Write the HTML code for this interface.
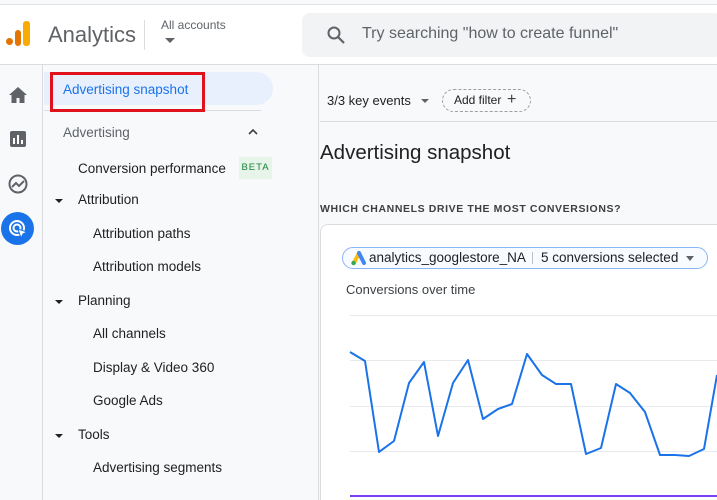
<!DOCTYPE html>
<html style="overflow:hidden;width:717px;height:500px"><head><meta charset="utf-8"><style>
*{margin:0;padding:0;box-sizing:border-box}
body{width:717px;height:500px;overflow:hidden;background:#f8f9fa;font-family:"Liberation Sans",Arial,sans-serif;position:relative;color:#202124}
.a{position:absolute;white-space:nowrap}
</style></head><body>
<div class="a" style="left:0;top:4px;width:717px;height:61px;background:#fff;border-top:1px solid #e3e3e3;border-bottom:1px solid #dadce0"></div>
<div class="a" style="left:6px;top:38px;width:7px;height:7px;border-radius:50%;background:#e37400"></div>
<div class="a" style="left:15px;top:30px;width:6px;height:16px;border-radius:3px;background:#e37400"></div>
<div class="a" style="left:23px;top:21px;width:7px;height:25px;border-radius:3px;background:#f9ab00"></div>
<div class="a" style="left:48px;top:22px;font-size:22px;color:#5f6368">Analytics</div>
<div class="a" style="left:144px;top:20px;width:1px;height:30px;background:#dadce0"></div>
<div class="a" style="left:161px;top:18px;font-size:12px;color:#5f6368">All accounts</div>
<div class="a" style="left:165px;top:38px;border-left:5px solid transparent;border-right:5px solid transparent;border-top:5px solid #5f6368"></div>
<div class="a" style="left:302px;top:13px;width:420px;height:44px;background:#f1f3f4;border-radius:8px"></div>
<svg class="a" style="left:326px;top:25px" width="20" height="20" viewBox="0 0 20 20"><circle cx="8" cy="8" r="5.5" fill="none" stroke="#5f6368" stroke-width="2"/><path d="M12 12l6 6" stroke="#5f6368" stroke-width="2.2"/></svg>
<div class="a" style="left:362px;top:25px;font-size:16px;color:#5f6368">Try searching "how to create funnel"</div>
<div class="a" style="left:0;top:65px;width:43px;height:435px;background:#f8f9fa;border-right:1px solid #dadce0"></div>
<svg class="a" style="left:8px;top:86px" width="20" height="18" viewBox="0 0 20 18"><path d="M10 1L1 9h2.5v8h5v-5h3v5h5V9H19z" fill="#5f6368"/></svg>
<svg class="a" style="left:9px;top:130px" width="18" height="18" viewBox="0 0 18 18"><rect x="1" y="1" width="16" height="16" rx="2" fill="#5f6368"/><rect x="4" y="8" width="2" height="6" fill="#fff"/><rect x="8" y="5" width="2" height="9" fill="#fff"/><rect x="12" y="10" width="2" height="4" fill="#fff"/></svg>
<svg class="a" style="left:7px;top:173px" width="22" height="22" viewBox="0 0 22 22"><circle cx="11" cy="11" r="8.5" fill="none" stroke="#5f6368" stroke-width="2"/><path d="M5 14l4-4 3 3 5-5" fill="none" stroke="#5f6368" stroke-width="2"/></svg>
<div class="a" style="left:1px;top:212px;width:33px;height:33px;border-radius:50%;background:#1a73e8"></div>
<svg class="a" style="left:6px;top:217px" width="24" height="24" viewBox="0 0 24 24"><circle cx="11" cy="11" r="7" fill="none" stroke="#fff" stroke-width="2"/><circle cx="11" cy="11" r="3.5" fill="none" stroke="#fff" stroke-width="2"/><path d="M12 12l3 9 2-4 4-2z" fill="#fff" stroke="#1a73e8" stroke-width="1"/></svg>
<div class="a" style="left:44px;top:65px;width:275px;height:435px;background:#f8f9fa;border-right:1px solid #dadce0"></div>
<div class="a" style="left:44px;top:72px;width:229px;height:33px;background:#e8f0fe;border-radius:0 17px 17px 0"></div>
<div class="a" style="left:44px;top:110px;width:217px;height:1px;background:#dadce0"></div>
<div class="a" style="left:50px;top:72px;width:155px;height:40px;border:3px solid #e0121b"></div>
<div class="a" style="left:63px;top:82px;font-size:13.5px;color:#1a73e8">Advertising snapshot</div>
<div class="a" style="left:63px;top:125px;font-size:13.5px;color:#5f6368">Advertising</div>
<svg class="a" style="left:247px;top:127px" width="12" height="10"><path d="M2 7l4-4 4 4" fill="none" stroke="#3c4043" stroke-width="1.6"/></svg>
<div class="a" style="left:78px;top:161px;font-size:13.5px">Conversion performance</div>
<div class="a" style="left:239px;top:157px;width:33px;height:22px;background:#e6f4ea;color:#188038;font-size:9.5px;letter-spacing:1px;text-align:center;line-height:22px">BETA</div>
<div class="a" style="left:78px;top:192px;font-size:13.5px">Attribution</div>
<div class="a" style="left:93px;top:226px;font-size:13.5px">Attribution paths</div>
<div class="a" style="left:93px;top:259px;font-size:13.5px">Attribution models</div>
<div class="a" style="left:78px;top:293px;font-size:13.5px">Planning</div>
<div class="a" style="left:93px;top:326px;font-size:13.5px">All channels</div>
<div class="a" style="left:93px;top:360px;font-size:13.5px">Display &amp; Video 360</div>
<div class="a" style="left:93px;top:393px;font-size:13.5px">Google Ads</div>
<div class="a" style="left:78px;top:427px;font-size:13.5px">Tools</div>
<div class="a" style="left:93px;top:460px;font-size:13.5px">Advertising segments</div>
<div class="a" style="left:55px;top:199px;border-left:4px solid transparent;border-right:4px solid transparent;border-top:4px solid #202124"></div>
<div class="a" style="left:55px;top:300px;border-left:4px solid transparent;border-right:4px solid transparent;border-top:4px solid #202124"></div>
<div class="a" style="left:55px;top:434px;border-left:4px solid transparent;border-right:4px solid transparent;border-top:4px solid #202124"></div>
<div class="a" style="left:327px;top:93px;font-size:13px">3/3 key events</div>
<div class="a" style="left:421px;top:99px;border-left:4px solid transparent;border-right:4px solid transparent;border-top:4px solid #5f6368"></div>
<div class="a" style="left:442px;top:89px;width:89px;height:23px;border:1px dashed #9aa0a6;border-radius:12px"></div>
<div class="a" style="left:454px;top:93px;font-size:12px">Add filter</div>
<div class="a" style="left:507px;top:92px;font-size:16px;color:#3c4043;line-height:16px">+</div>
<div class="a" style="left:320px;top:121px;width:400px;height:1px;background:#dadce0"></div>
<div class="a" style="left:320px;top:141px;font-size:20.5px">Advertising snapshot</div>
<div class="a" style="left:320px;top:203px;font-size:10.5px;font-weight:bold;letter-spacing:.6px;color:#3c4043">WHICH CHANNELS DRIVE THE MOST CONVERSIONS?</div>
<div class="a" style="left:320px;top:224px;width:410px;height:286px;background:#fff;border:1px solid #dadce0;border-radius:8px"></div>
<div class="a" style="left:342px;top:247px;width:366px;height:22px;border:1px solid #8ab4f8;border-radius:11px;background:#f8fbff"></div>
<svg class="a" style="left:350px;top:249px" width="17" height="17" viewBox="0 0 17 17"><path d="M4 14L9 4" stroke="#fbbc04" stroke-width="4" stroke-linecap="round"/><path d="M9 4l5 10" stroke="#4285f4" stroke-width="4" stroke-linecap="round"/><circle cx="3.5" cy="14" r="2.2" fill="#34a853"/></svg>
<div class="a" style="left:369px;top:250px;font-size:13.5px">analytics_googlestore_NA</div>
<div class="a" style="left:532px;top:252px;width:1px;height:12px;background:#bdc1c6"></div>
<div class="a" style="left:541px;top:250px;font-size:13.5px">5 conversions selected</div>
<div class="a" style="left:686px;top:256px;border-left:4.5px solid transparent;border-right:4.5px solid transparent;border-top:5px solid #5f6368"></div>
<div class="a" style="left:346px;top:282px;font-size:13px;color:#3c4043">Conversions over time</div>
<svg class="a" style="left:0;top:0" width="717" height="500">
<g stroke="#e8eaed" stroke-width="1"><path d="M350 315.5H717M350 360.5H717M350 406.5H717M350 451.5H717"/></g>
<path d="M350 496H717" stroke="#7e3ff2" stroke-width="2"/>
<polyline fill="none" stroke="#1a73e8" stroke-width="2" stroke-linejoin="round" points="350,352 365,361 379,452 394,441 409,383 424,362 438,436 453,383 468,360 483,419 498,409 512,404 527,354 542,375 556,384 571,384 586,454 601,448 616,384 630,393 645,412 660,455 675,455 689,456 704,449 717,375"/>
</svg>
</body></html>
